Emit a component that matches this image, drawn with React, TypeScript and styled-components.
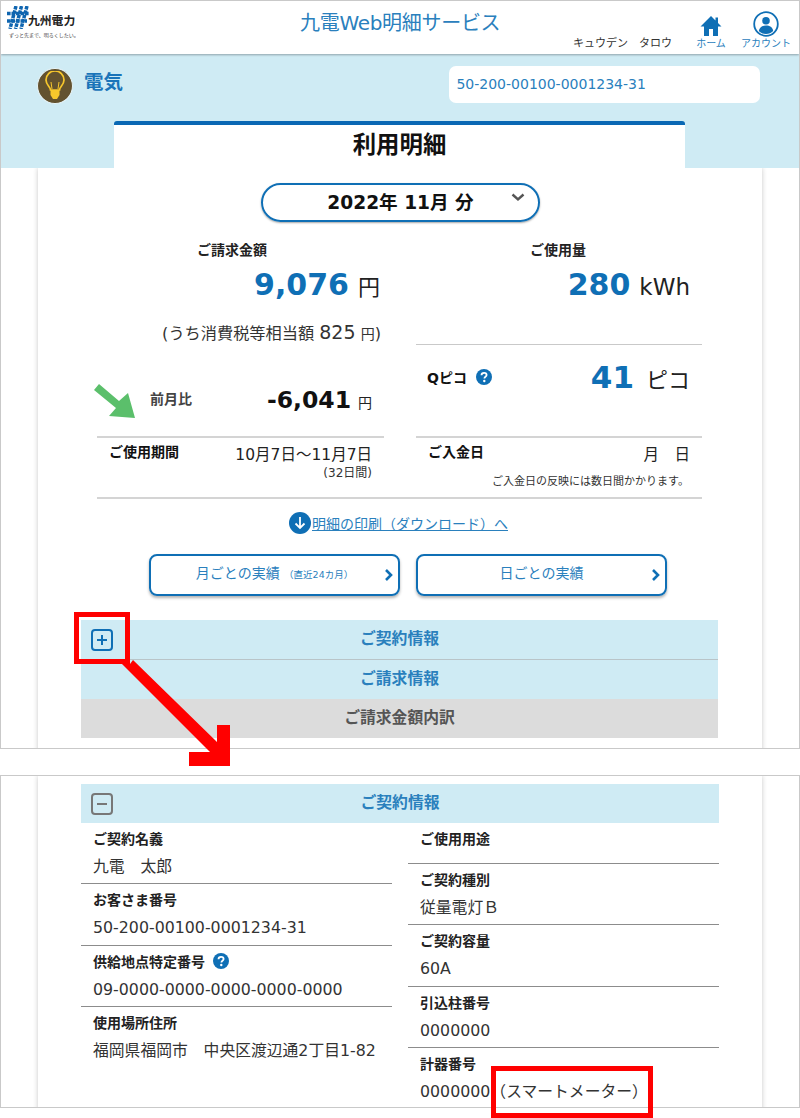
import { createGlobalStyle, styled } from "styled-components";

const BLUE = "#0f6fb5";
const SKY = "#cfebf4";
const LINE = "#c9c9c9";

const Global = createGlobalStyle`
  html, body { margin: 0; padding: 0; background: #fff; }
  body {
    font-family: "DejaVu Sans", "Noto Sans CJK JP", sans-serif;
    color: #222;
  }
  * { box-sizing: border-box; }
`;

const contractLeft = [
  { label: "ご契約名義", value: "九電\u3000太郎", h: 61 },
  { label: "お客さま番号", value: "50-200-00100-0001234-31", h: 62 },
  { label: "供給地点特定番号", value: "09-0000-0000-0000-0000-0000", h: 61, help: true },
  { label: "使用場所住所", value: "福岡県福岡市\u3000中央区渡辺通2丁目1-82", h: 61 },
];

const contractRight = [
  { label: "ご使用用途", value: "", h: 41 },
  { label: "ご契約種別", value: "従量電灯Ｂ", h: 61 },
  { label: "ご契約容量", value: "60A", h: 62 },
  { label: "引込柱番号", value: "0000000", h: 61 },
  { label: "計器番号", value: "0000000（スマートメーター）", h: 61 },
];

function HelpIcon() {
  return (
    <svg width="16" height="16" viewBox="0 0 16 16">
      <circle cx="8" cy="8" r="8" fill={BLUE} />
      <path d="M5.5 6.2c0-1.5 1.1-2.4 2.6-2.4s2.5.9 2.5 2.1c0 1.9-2.2 1.8-2.2 3.5" fill="none" stroke="#fff" strokeWidth="1.8" />
      <circle cx="8.3" cy="12" r="1.2" fill="#fff" />
    </svg>
  );
}

function Chevron({ color = BLUE }: { color?: string }) {
  return (
    <svg width="10" height="14" viewBox="0 0 10 14">
      <path d="M2 2l5 5-5 5" fill="none" stroke={color} strokeWidth="2.6" />
    </svg>
  );
}

function App() {
  return (
    <Page>
      <Global />
      <TopFrame>
        <Header>
          <Logo>
            <LogoTop>
              <svg width="22" height="23" viewBox="0 0 22 23">
                <g fill="none" stroke="#0f65b0" strokeWidth="3.5" strokeDasharray="3.6 0.9">
                  <path d="M9 0L3 23" />
                  <path d="M14.5 0L8.5 23" />
                  <path d="M20 0L14 23" />
                  <path d="M0 7.5H22" />
                  <path d="M0 15H20" />
                </g>
              </svg>
              <LogoName>九州電力</LogoName>
            </LogoTop>
            <LogoTag>ずっと先まで、明るくしたい。</LogoTag>
          </Logo>
          <HeaderTitle>九電Web明細サービス</HeaderTitle>
          <UserName>キュウデン　タロウ</UserName>
          <NavItem $w={44}>
            <svg width="22" height="22" viewBox="0 0 22 22">
              <path d="M11 1L0.5 11.5H4V21H9V14H13V21H18V11.5H21.5L18 8V2.5H15.5V5.5Z" fill={BLUE} />
            </svg>
            <NavLabel>ホーム</NavLabel>
          </NavItem>
          <NavItem $w={50}>
            <svg width="26" height="26" viewBox="0 0 26 26">
              <circle cx="13" cy="13" r="11.8" fill="#fff" stroke={BLUE} strokeWidth="1.8" />
              <circle cx="13" cy="9.8" r="3.8" fill={BLUE} />
              <path d="M5.8 20c.6-3.7 3.4-5.4 7.2-5.4s6.6 1.7 7.2 5.4c-1.9 1.9-4.4 3-7.2 3s-5.3-1.1-7.2-3z" fill={BLUE} />
            </svg>
            <NavLabel>アカウント</NavLabel>
          </NavItem>
        </Header>
        <Band>
          <BandRow>
            <BulbBadge>
              <svg width="24" height="30" viewBox="0 0 24 30">
                <path d="M7.5 19c0-3-4.5-5-4.5-10a9 9 0 0 1 18 0c0 5-4.5 7-4.5 10z" fill="none" stroke="#f7c72c" strokeWidth="1.7" />
                <path d="M9 18l-1-7M15 18l1-7" stroke="#f7c72c" strokeWidth="1" />
                <path d="M7.5 19h9v5l-2.5 4h-4l-2.5-4z" fill="#f7c72c" />
              </svg>
            </BulbBadge>
            <BandTitle>電気</BandTitle>
            <AccountBox>50-200-00100-0001234-31</AccountBox>
          </BandRow>
          <Tab>利用明細</Tab>
        </Band>
        <Card>
          <MonthPill>
            2022年 11月 分
            <PillChevron>
              <svg width="14" height="9" viewBox="0 0 14 9">
                <path d="M1.5 1.5L7 6.5l5.5-5" fill="none" stroke="#555" strokeWidth="2.4" />
              </svg>
            </PillChevron>
          </MonthPill>
          <Summary>
            <Column>
              <AmountBlock $h={124}>
                <Caption $indent={100}>ご請求金額</Caption>
                <BigLine $pad={4}>
                  <BigNumber $size={30} $color={BLUE}>9,076</BigNumber>
                  <Unit $size={22}>円</Unit>
                </BigLine>
                <TaxLine>
                  (うち消費税等相当額 <TaxNum>825</TaxNum> <TaxYen>円</TaxYen>)
                </TaxLine>
              </AmountBlock>
              <CompareRow>
                <GreenArrow width="44" height="36" viewBox="0 0 44 36">
                  <polygon points="0,8 5,2 25,19 34,11 41,36 15,34 22,26" fill="#5bbf6b" />
                </GreenArrow>
                <CompareLabel>前月比</CompareLabel>
                <CompareValue>
                  <BigNumber $size={23.5} $color="#111">-6,041</BigNumber>
                  <Unit $size={14}>円</Unit>
                </CompareValue>
              </CompareRow>
              <PeriodRow>
                <PeriodLabel>ご使用期間</PeriodLabel>
                <PeriodValue>
                  <PeriodDates>10月7日〜11月7日</PeriodDates>
                  <PeriodDays>(32日間)</PeriodDays>
                </PeriodValue>
              </PeriodRow>
            </Column>
            <Column>
              <AmountBlock $h={105} $line>
                <Caption $indent={114}>ご使用量</Caption>
                <BigLine $pad={12}>
                  <BigNumber $size={30} $color={BLUE}>280</BigNumber>
                  <Unit $size={23}>kWh</Unit>
                </BigLine>
              </AmountBlock>
              <PicoRow>
                <PicoLabel>
                  Qピコ <HelpIcon />
                </PicoLabel>
                <PicoValue>
                  <BigNumber $size={31} $color={BLUE}>41</BigNumber>
                  <Unit $size={22}>ピコ</Unit>
                </PicoValue>
              </PicoRow>
              <PeriodRow>
                <PeriodLabel>ご入金日</PeriodLabel>
                <PeriodValue>
                  <PeriodDates>月　日</PeriodDates>
                </PeriodValue>
                <PayNote>ご入金日の反映には数日間かかります。</PayNote>
              </PeriodRow>
            </Column>
          </Summary>
          <PrintLink>
            <svg width="22" height="22" viewBox="0 0 22 22">
              <circle cx="11" cy="11" r="11" fill={BLUE} />
              <path d="M11 5v11M6.5 11.5L11 16l4.5-4.5" fill="none" stroke="#fff" strokeWidth="1.8" />
            </svg>
            <PrintText>明細の印刷（ダウンロード）へ</PrintText>
          </PrintLink>
          <Buttons>
            <HistoryButton $w={251}>
              <span>
                月ごとの実績 <Small>（直近24カ月）</Small>
              </span>
              <ButtonChevron>
                <Chevron />
              </ButtonChevron>
            </HistoryButton>
            <HistoryButton $w={251}>
              <span>日ごとの実績</span>
              <ButtonChevron>
                <Chevron />
              </ButtonChevron>
            </HistoryButton>
          </Buttons>
          <Accordion>
            <AccordionHead $h={39}>
              <ToggleIcon $color={BLUE}>
                <svg width="12" height="12" viewBox="0 0 12 12">
                  <path d="M1 6h10M6 1v10" stroke={BLUE} strokeWidth="2" />
                </svg>
              </ToggleIcon>
              ご契約情報
            </AccordionHead>
            <AccordionHead $h={40} $divided>ご請求情報</AccordionHead>
            <AccordionHead $h={39} $gray>ご請求金額内訳</AccordionHead>
          </Accordion>
        </Card>
      </TopFrame>
      <BottomFrame>
        <DetailCard>
          <AccordionHead $h={39}>
            <ToggleIcon $color="#777">
              <svg width="12" height="12" viewBox="0 0 12 12">
                <path d="M1 6h10" stroke="#777" strokeWidth="2" />
              </svg>
            </ToggleIcon>
            ご契約情報
          </AccordionHead>
          <DetailGrid>
            <DetailColumn>
              {contractLeft.map((row) => (
                <DetailRow key={row.label} $h={row.h}>
                  <DetailLabel>
                    {row.label}
                    {row.help && <HelpIcon />}
                  </DetailLabel>
                  <DetailValue>{row.value}</DetailValue>
                </DetailRow>
              ))}
            </DetailColumn>
            <DetailColumn>
              {contractRight.map((row) => (
                <DetailRow key={row.label} $h={row.h}>
                  <DetailLabel>{row.label}</DetailLabel>
                  {row.value && <DetailValue>{row.value}</DetailValue>}
                </DetailRow>
              ))}
            </DetailColumn>
          </DetailGrid>
        </DetailCard>
      </BottomFrame>
      <RedBox $x={74} $y={612} $w={56} $h={52} />
      <RedBox $x={491} $y={1066} $w={162} $h={52} />
      <RedArrow width="800" height="800" viewBox="0 0 800 800">
        <polygon points="122,664 130,664 133,660 217,742 217,725 230,725 230,766 189,766 189,752 210,752" fill="#ff0000" />
      </RedArrow>
    </Page>
  );
}
export default App;

const Page = styled.div`
  position: relative;
  width: 800px;
  height: 1118px;
  overflow: hidden;
`;

const TopFrame = styled.div`
  height: 749px;
  border: 1px solid ${LINE};
  overflow: hidden;
`;

const Header = styled.header`
  position: relative;
  z-index: 2;
  height: 53px;
  padding-left: 6px;
  display: flex;
  align-items: flex-start;
  background: #fff;
  box-shadow: 0 1px 2px #8fa3ab;
`;

const Logo = styled.div`
  width: 92px;
  padding-top: 5px;
`;

const LogoTop = styled.div`
  display: flex;
  align-items: center;
  height: 23px;
`;

const LogoName = styled.span`
  margin-top: 6px;
  margin-left: -1px;
  font-size: 11.8px;
  line-height: 16px;
  font-weight: 700;
  color: #222;
`;

const LogoTag = styled.div`
  margin-top: 2px;
  padding-left: 2px;
  font-size: 5px;
  line-height: 8px;
  color: #444;
  white-space: nowrap;
`;

const HeaderTitle = styled.div`
  width: 474px;
  padding-top: 7px;
  padding-left: 201px;
  font-size: 20px;
  line-height: 30px;
  letter-spacing: -0.3px;
  color: #2a80bd;
  white-space: nowrap;
`;

const UserName = styled.div`
  width: 114px;
  margin-right: 2px;
  padding-top: 34px;
  font-size: 11px;
  line-height: 17px;
  white-space: nowrap;
  color: #333;
`;

const NavItem = styled.div<{ $w: number }>`
  width: ${({ $w }) => $w}px;
  margin-right: 8px;
  padding-top: 8px;
  height: 50px;
  display: flex;
  flex-direction: column;
  align-items: center;
  justify-content: flex-end;
  padding-bottom: 1px;
`;

const NavLabel = styled.span`
  font-size: 10px;
  line-height: 13px;
  color: #2a80bd;
  white-space: nowrap;
`;

const Band = styled.div`
  height: 114px;
  background: ${SKY};
  position: relative;
`;

const BandRow = styled.div`
  height: 67px;
  padding: 14px 39px 0 36px;
  display: flex;
  align-items: flex-start;
`;

const BulbBadge = styled.div`
  width: 36px;
  height: 36px;
  border-radius: 50%;
  background: #63522f;
  border: 1px solid #e6f4f8;
  display: flex;
  align-items: center;
  justify-content: center;
`;

const BandTitle = styled.div`
  margin-left: 11px;
  width: 364px;
  margin-top: -3px;
  font-size: 19.5px;
  line-height: 36px;
  font-weight: 700;
  color: #1a74b9;
`;

const AccountBox = styled.div`
  width: 311px;
  height: 37px;
  margin-left: 2px;
  margin-top: -2px;
  padding-left: 7px;
  border-radius: 7px;
  background: #fff;
  font-size: 14px;
  line-height: 36px;
  color: #2a80bd;
`;

const Tab = styled.div`
  width: 571px;
  height: 47px;
  margin-left: 113px;
  border-top: 4px solid #0a68b4;
  border-radius: 3px 3px 0 0;
  background: #fff;
  text-align: center;
  font-size: 23.4px;
  line-height: 40px;
  font-weight: 700;
  color: #111;
`;

const Card = styled.div`
  width: 724px;
  margin-left: 37px;
  padding: 15px 60px 0 59px;
  height: 600px;
  background: #fff;
  box-shadow: 0 0 5px rgba(0, 0, 0, 0.22);
`;

const MonthPill = styled.div`
  position: relative;
  width: 279px;
  height: 39px;
  margin-left: 164px;
  border: 2px solid #0f6fb5;
  border-radius: 20px;
  box-shadow: 0 1px 2px rgba(0, 0, 0, 0.35);
  text-align: center;
  font-size: 18.6px;
  line-height: 35px;
  font-weight: 700;
  color: #111;
`;

const PillChevron = styled.span`
  position: absolute;
  right: 13px;
  top: 8px;
  display: flex;
`;

const Summary = styled.div`
  margin-top: 18px;
  display: grid;
  grid-template-columns: 287px 286px;
  column-gap: 32px;
  border-bottom: 2px solid #d4d4d4;
`;

const Column = styled.div`
  display: flex;
  flex-direction: column;
`;

const AmountBlock = styled.div<{ $h: number; $line?: boolean }>`
  height: ${({ $h }) => $h}px;
  ${({ $line }) => $line && `border-bottom: 1px solid ${LINE};`}
`;

const Caption = styled.div<{ $indent: number }>`
  padding-left: ${({ $indent }) => $indent}px;
  font-size: 14px;
  line-height: 20px;
  font-weight: 700;
  color: #222;
`;

const BigLine = styled.div<{ $pad: number }>`
  margin-top: 5px;
  padding-right: ${({ $pad }) => $pad}px;
  display: flex;
  justify-content: flex-end;
  align-items: baseline;
  gap: 9px;
  line-height: 40px;
`;

const BigNumber = styled.span<{ $size: number; $color: string }>`
  font-size: ${({ $size }) => $size}px;
  font-weight: 700;
  color: ${({ $color }) => $color};
`;

const Unit = styled.span<{ $size: number }>`
  font-size: ${({ $size }) => $size}px;
  color: #222;
`;

const TaxLine = styled.div`
  margin-top: 9px;
  padding-right: 3px;
  text-align: right;
  font-size: 16.2px;
  line-height: 30px;
  color: #333;
  white-space: nowrap;
`;

const TaxNum = styled.span`
  font-size: 19px;
`;

const TaxYen = styled.span`
  font-size: 14px;
`;

const CompareRow = styled.div`
  height: 74px;
  display: flex;
  align-items: center;
  border-bottom: 2px solid #d4d4d4;
`;

const GreenArrow = styled.svg`
  margin-left: -3px;
  flex: none;
`;

const CompareLabel = styled.span`
  margin-left: 12px;
  padding-bottom: 4px;
  font-size: 14px;
  font-weight: 700;
  color: #444;
`;

const CompareValue = styled.span`
  margin-left: auto;
  padding-right: 12px;
  display: flex;
  align-items: baseline;
  gap: 7px;
`;

const PeriodRow = styled.div`
  position: relative;
  height: 59px;
  padding: 4px 12px 0;
  display: flex;
  justify-content: space-between;
  align-items: flex-start;
`;

const PeriodLabel = styled.span`
  font-size: 14px;
  line-height: 20px;
  font-weight: 700;
  color: #111;
`;

const PeriodValue = styled.div`
  padding-top: 2px;
  text-align: right;
`;

const PeriodDates = styled.div`
  font-size: 15.5px;
  line-height: 22px;
  color: #222;
  white-space: pre;
`;

const PeriodDays = styled.div`
  font-size: 12px;
  line-height: 14px;
  color: #333;
`;

const PayNote = styled.div`
  position: absolute;
  right: 13px;
  top: 36px;
  font-size: 11px;
  line-height: 16px;
  color: #333;
  white-space: nowrap;
`;

const PicoRow = styled.div`
  height: 93px;
  padding: 0 12px 28px 11px;
  display: flex;
  justify-content: space-between;
  align-items: center;
  border-bottom: 2px solid #d4d4d4;
`;

const PicoLabel = styled.span`
  display: flex;
  align-items: center;
  gap: 9px;
  font-size: 14px;
  font-weight: 700;
  color: #111;
`;

const PicoValue = styled.span`
  display: flex;
  align-items: baseline;
  gap: 12px;
`;

const PrintLink = styled.div`
  height: 55px;
  padding-bottom: 8px;
  padding-right: 2px;
  display: flex;
  align-items: center;
  justify-content: center;
  gap: 1px;
`;

const PrintText = styled.span`
  font-size: 14px;
  color: #2a80bd;
  text-decoration: underline;
`;

const Buttons = styled.div`
  height: 42px;
  margin-left: 52px;
  display: flex;
  gap: 16px;
`;

const HistoryButton = styled.div<{ $w: number }>`
  position: relative;
  width: ${({ $w }) => $w}px;
  height: 42px;
  border: 2px solid #0f6fb5;
  border-radius: 8px;
  box-shadow: 0 2px 3px rgba(0, 0, 0, 0.3);
  display: flex;
  align-items: center;
  justify-content: center;
  font-size: 14px;
  color: #2a80bd;
  padding-bottom: 6px;
`;

const Small = styled.span`
  font-size: 9.5px;
`;

const ButtonChevron = styled.span`
  position: absolute;
  right: 4px;
  top: 12px;
  display: flex;
`;

const Accordion = styled.div`
  margin: 24px 0 0 -16px;
  width: 637px;
`;

const AccordionHead = styled.div<{ $h: number; $gray?: boolean; $divided?: boolean }>`
  position: relative;
  height: ${({ $h }) => $h}px;
  background: ${({ $gray }) => ($gray ? "#dcdcdc" : SKY)};
  ${({ $divided }) => $divided && "border-top: 1px solid #b9c4c8;"}
  text-align: center;
  font-size: 15.8px;
  line-height: 37px;
  font-weight: 700;
  color: ${({ $gray }) => ($gray ? "#555" : "#2a80bd")};
`;

const ToggleIcon = styled.span<{ $color: string }>`
  position: absolute;
  left: 10px;
  top: 9px;
  width: 22px;
  height: 22px;
  border: 2px solid ${({ $color }) => $color};
  border-radius: 4px;
  display: flex;
  align-items: center;
  justify-content: center;
`;

const BottomFrame = styled.div`
  height: 333px;
  margin-top: 26px;
  border: 1px solid ${LINE};
  overflow: hidden;
`;

const DetailCard = styled.div`
  width: 724px;
  height: 340px;
  margin-left: 37px;
  padding: 8px 43px 0;
  background: #fff;
  box-shadow: 0 0 5px rgba(0, 0, 0, 0.22);
`;

const DetailGrid = styled.div`
  display: grid;
  grid-template-columns: 311px 311px;
  column-gap: 16px;
`;

const DetailColumn = styled.div`
  display: flex;
  flex-direction: column;
`;

const DetailRow = styled.div<{ $h: number }>`
  height: ${({ $h }) => $h}px;
  padding: 5px 12px 0;
  border-bottom: 1px solid #8c8c8c;
  &:last-child {
    border-bottom: none;
  }
`;

const DetailLabel = styled.div`
  display: flex;
  align-items: center;
  gap: 8px;
  height: 20px;
  font-size: 14px;
  font-weight: 700;
  color: #222;
`;

const DetailValue = styled.div`
  margin-top: 7px;
  font-size: 15.8px;
  line-height: 24px;
  color: #333;
  white-space: nowrap;
`;

const RedBox = styled.div<{ $x: number; $y: number; $w: number; $h: number }>`
  position: absolute;
  left: ${({ $x }) => $x}px;
  top: ${({ $y }) => $y}px;
  width: ${({ $w }) => $w}px;
  height: ${({ $h }) => $h}px;
  border: 5px solid #ff0000;
`;

const RedArrow = styled.svg`
  position: absolute;
  left: 0;
  top: 0;
`;
